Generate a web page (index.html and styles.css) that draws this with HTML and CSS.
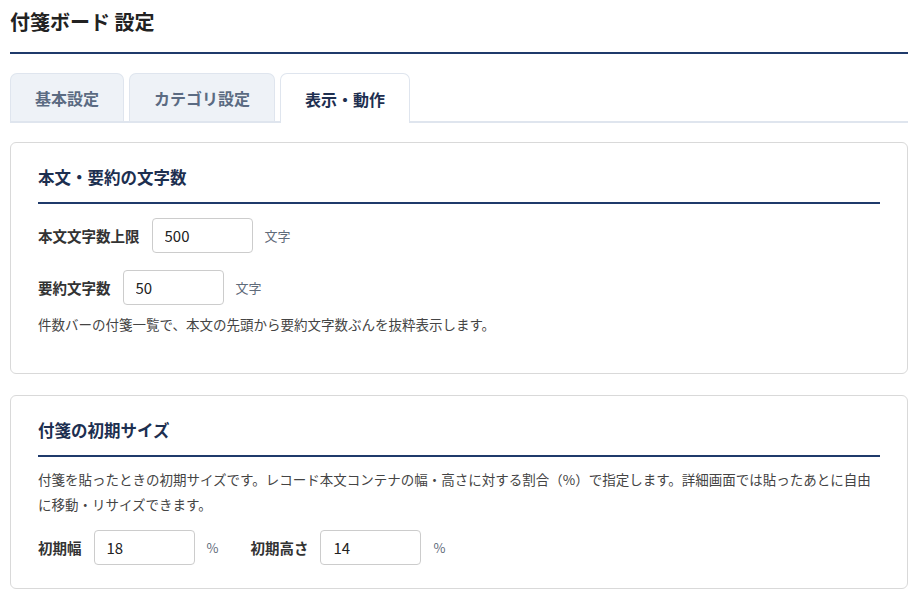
FILE: index.html
```html
<!DOCTYPE html>
<html lang="ja">
<head>
<meta charset="utf-8">
<title>付箋ボード 設定</title>
<link rel="stylesheet" href="styles.css">
</head>
<body>
<div class="page">
  <h1 class="page-title">付箋ボード 設定</h1>
  <div class="tabs">
    <div class="tab">基本設定</div>
    <div class="tab">カテゴリ設定</div>
    <div class="tab active">表示・動作</div>
  </div>

  <section class="card card-first">
    <h2 class="card-title">本文・要約の文字数</h2>
    <div class="row">
      <label class="label">本文文字数上限</label>
      <input class="num" type="text" value="500">
      <span class="unit">文字</span>
    </div>
    <div class="row">
      <label class="label">要約文字数</label>
      <input class="num" type="text" value="50">
      <span class="unit">文字</span>
    </div>
    <p class="desc">件数バーの付箋一覧で、本文の先頭から要約文字数ぶんを抜粋表示します。</p>
  </section>

  <section class="card">
    <h2 class="card-title">付箋の初期サイズ</h2>
    <p class="desc desc-top">付箋を貼ったときの初期サイズです。レコード本文コンテナの幅・高さに対する割合（%）で指定します。詳細画面では貼ったあとに自由に移動・リサイズできます。</p>
    <div class="row row-inline">
      <div class="pair">
        <label class="label">初期幅</label>
        <input class="num" type="text" value="18">
        <span class="unit">%</span>
      </div>
      <div class="pair">
        <label class="label">初期高さ</label>
        <input class="num" type="text" value="14">
        <span class="unit">%</span>
      </div>
    </div>
  </section>
</div>
</body>
</html>
```

FILE: styles.css
```css
* { box-sizing: border-box; }
html, body { margin: 0; padding: 0; background: #fff; }
body {
  font-family: "Noto Sans CJK JP", "Noto Sans", sans-serif;
  color: #333;
}
.page { padding: 0 8px 0 10px; }

.page-title {
  margin: 0;
  padding-top: 9px;
  height: 54px;
  font-size: 20px;
  line-height: 26px;
  font-weight: 700;
  color: #222;
  border-bottom: 2px solid #1f3a6b;
}

.tabs {
  display: flex;
  gap: 5px;
  margin-top: 19px;
  border-bottom: 2px solid #dfe5ee;
  margin-bottom: 19px;
}
.tab {
  height: 48px;
  padding: 0 24px;
  display: flex;
  align-items: center;
  font-size: 16px;
  font-weight: 700;
  color: #5b6b82;
  background: #eef2f7;
  border: 1px solid #dfe5ee;
  border-bottom: none;
  border-radius: 7px 7px 0 0;
  margin-bottom: -2px;
}
.tab.active {
  background: #fff;
  color: #1e2f50;
  border-color: #dfe5ee;
  height: 50px;
}

.card {
  border: 1px solid #d9d9d9;
  border-radius: 6px;
  padding: 21px 27px 23px 27px;
  margin-bottom: 21px;
}
.card-first { padding-bottom: 36px; }

.card-title {
  margin: 0;
  font-size: 16.5px;
  line-height: 26px;
  font-weight: 700;
  color: #1d2f50;
  padding-bottom: 12px;
  border-bottom: 2px solid #1f3a6b;
}

.row {
  display: flex;
  align-items: center;
  gap: 12px;
  margin-top: 14px;
}
.row + .row { margin-top: 17px; }
.label {
  font-size: 14.5px;
  font-weight: 700;
  color: #333;
}
.num {
  width: 101px;
  height: 35px;
  border: 1px solid #cccccc;
  border-radius: 4px;
  padding: 0 12px;
  font-family: "Noto Sans CJK JP", "Noto Sans", sans-serif;
  font-size: 15px;
  color: #222;
  background: #fff;
}
.unit {
  font-size: 13px;
  color: #5f6b7a;
}

.desc {
  margin: 7px 0 0 0;
  font-size: 13.5px;
  line-height: 25px;
  color: #444;
}
.desc-top { margin-top: 10px; }

.row-inline { gap: 32px; margin-top: 13px; }
.pair {
  display: flex;
  align-items: center;
  gap: 12px;
}
```
